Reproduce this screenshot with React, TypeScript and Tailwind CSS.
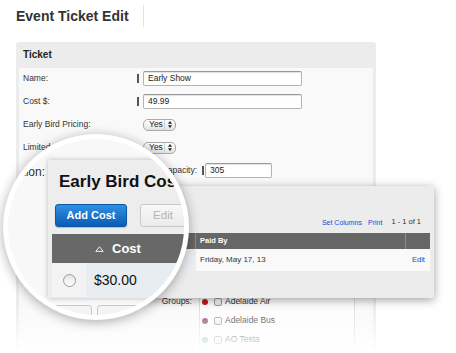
import React from "react";

const UpDown = () => (
  <svg width="4" height="7" viewBox="0 0 4 7">
    <path d="M2 0 L4 2.7 H0Z M2 7 L4 4.3 H0Z" fill="#222" />
  </svg>
);

function Select() {
  return (
    <div className="flex h-[12px] w-[33px] items-center justify-between rounded-[5px] border border-[#a9a9a9] bg-gradient-to-b from-white to-[#e2e2e2] pl-[5px] pr-[3px] text-[8.5px] leading-none text-[#222]">
      <span>Yes</span>
      <span className="flex h-full items-center border-l border-[#cfcfcf] pl-[3px]">
        <UpDown />
      </span>
    </div>
  );
}

function Input({ value, width }: { value: string; width: string }) {
  return (
    <div
      className={`flex h-[15px] items-center rounded-[2px] border border-[#b3b3b3] border-t-[#999] bg-white pl-[4px] text-[8.5px] leading-none text-[#222] shadow-[inset_0_1px_1px_rgba(0,0,0,0.12)] ${width}`}
    >
      {value}
    </div>
  );
}

function Marker() {
  return <div className="h-[9px] w-[2px] bg-[#555]" />;
}

function Row({ label, children, marker }: { label: string; children: React.ReactNode; marker?: boolean }) {
  return (
    <div className="flex h-[15px] items-center">
      <div className="w-[118px] pl-[4px] text-[8.5px] leading-none text-[#333]">{label}</div>
      <div className="w-[2px]">{marker ? <Marker /> : null}</div>
      <div className="ml-[4px]">{children}</div>
    </div>
  );
}

function GroupItem({ color, label }: { color: string; label: string }) {
  return (
    <div className="flex h-[19px] items-center pl-[2px]">
      <div className={`h-[6px] w-[6px] rounded-full ${color}`} />
      <div className="ml-[6px] h-[8px] w-[8px] rounded-[2px] border border-[#9a9a9a] bg-gradient-to-b from-white to-[#e6e6e6]" />
      <span className="ml-[3px] text-[8.5px] leading-none text-[#333]">{label}</span>
    </div>
  );
}

export default function App() {
  return (
    <div className="relative h-[353px] w-[456px] overflow-hidden bg-white font-['Liberation_Sans',Arial,sans-serif] text-[#333]">
      {/* Title */}
      <div className="mt-[5px] flex h-[22px] items-center pl-[16px]">
        <h1 className="text-[14px] font-bold leading-[14px] text-[#333]">Event Ticket Edit</h1>
        <div className="ml-[14px] h-[22px] w-px bg-[#e4e4e4]" />
      </div>

      {/* Panel */}
      <div className="ml-[16px] mt-[15px] w-[360px]">
        <div className="flex h-[26px] items-center rounded-t-[3px] bg-[#ececec] pl-[7px] text-[10px] font-bold leading-none text-[#222]">
          Ticket
        </div>
        <div className="h-[285px] border-x-[3px] border-[#ececec] bg-[#f9f9f9] pt-[3px]">
          <div className="flex flex-col gap-[8px]">
            <Row label="Name:" marker>
              <Input value="Early Show" width="w-[159px]" />
            </Row>
            <Row label="Cost $:" marker>
              <Input value="49.99" width="w-[159px]" />
            </Row>
            <Row label="Early Bird Pricing:">
              <Select />
            </Row>
            <Row label="Limited Quantity:">
              <Select />
            </Row>
            <div className="flex h-[15px] items-center">
              <div className="w-[178px] text-right text-[8.5px] leading-none text-[#333]">Capacity:</div>
              <div className="ml-[5px]">
                <Marker />
              </div>
              <div className="ml-[1px]">
                <Input value="305" width="w-[67px]" />
              </div>
            </div>
          </div>

          {/* Groups */}
          <div className="mt-[114px] flex items-start">
            <div className="flex h-[19px] w-[173px] items-center justify-end text-[8.5px] leading-none text-[#333]">
              Groups:
            </div>
            <div className="ml-[7px] h-[70px] w-[156px] border-x border-[#dcdcdc] bg-[#fcfcfc]">
              <GroupItem color="bg-[#c0161a]" label="Adelaide Air" />
              <GroupItem color="bg-[#8d4f68]" label="Adelaide Bus" />
              <GroupItem color="bg-[#7fb7b1]" label="AO Testa" />
            </div>
          </div>
        </div>
      </div>

      {/* bottom fade */}
      <div className="absolute left-0 right-0 top-[305px] h-[48px] bg-gradient-to-b from-white/0 to-white" />

      {/* Popup card */}
      <div className="absolute left-[130px] top-[186px] h-[112px] w-[304px] rounded-[2px] bg-[#ececec] shadow-[0_2px_10px_rgba(0,0,0,0.38)]">
        <div className="mt-[30px] flex h-[12px] items-center justify-end pr-[13px] leading-none">
          <span className="text-[7px] text-[#2e3fd8]">Set Columns</span>
          <span className="ml-[6px] text-[7px] text-[#2e3fd8]">Print</span>
          <span className="ml-[9px] text-[7.5px] text-[#333]">1 - 1 of 1</span>
        </div>
        <div className="mx-[4px] mt-[5px]">
          <div className="grid h-[16px] grid-cols-[16px_46px_210px_24px] bg-[#666] text-[7.5px] font-bold leading-none text-white">
            <div />
            <div className="flex items-center border-r border-[#8c8c8c] pl-[6px]">Cost</div>
            <div className="flex items-center border-r border-[#8c8c8c] pl-[4px]">Paid By</div>
            <div />
          </div>
          <div className="grid h-[22px] grid-cols-[16px_46px_210px_24px] bg-[#f9f9f9] text-[8px] leading-none">
            <div />
            <div className="flex items-center bg-[#eaeef2] pl-[4px] text-[#111]">$30.00</div>
            <div className="flex items-center pl-[4px] text-[#333]">Friday, May 17, 13</div>
            <div className="flex items-center pl-[6px] text-[7.5px] text-[#2e3fd8]">Edit</div>
          </div>
        </div>
      </div>

      {/* Magnifier */}
      <div className="absolute left-[3px] top-[134px] h-[186px] w-[186px] rounded-full bg-white p-[5px] shadow-[0_2px_12px_rgba(0,0,0,0.32)]">
        <div className="relative h-full w-full overflow-hidden rounded-full bg-[#f8f8f8]">
          <div className="flex pt-[21px]">
            <div className="flex w-[40px] shrink-0 justify-end pr-[3px] pt-[6px]">
              <span className="whitespace-nowrap text-[12px] leading-[12px] text-[#333]">Location:</span>
            </div>
            <div className="h-[138px] w-[220px] shrink-0 bg-[#ededed] shadow-[0_0_5px_rgba(0,0,0,0.25)]">
              <div className="whitespace-nowrap pl-[11px] pt-[13px] text-[17px] font-bold leading-[17px] text-[#111]">
                Early Bird Cost
              </div>
              <div className="mt-[14px] flex gap-[13px] pl-[7px]">
                <div className="flex h-[23px] w-[72px] items-center justify-center rounded-[3px] border border-[#0b56a6] bg-gradient-to-b from-[#2f90e4] to-[#0a5cb4] text-[11px] font-bold leading-none text-white shadow-[0_1px_1px_rgba(0,0,0,0.2)]">
                  Add Cost
                </div>
                <div className="flex h-[23px] w-[46px] items-center justify-center rounded-[3px] border border-[#c9c9c9] bg-gradient-to-b from-[#f8f8f8] to-[#ebebeb] text-[11.5px] leading-none text-[#b3b3b3]">
                  Edit
                </div>
              </div>
              <div className="ml-[4px] mt-[7px]">
                <div className="flex h-[29px] bg-[#686868]">
                  <div className="w-[34px]" />
                  <div className="flex items-center pl-[9px]">
                    <svg width="9" height="6" viewBox="0 0 9 6">
                      <polygon points="0.8,5.4 4.5,0.8 8.2,5.4" fill="none" stroke="#fff" strokeWidth="0.9" />
                    </svg>
                    <span className="ml-[8px] text-[13px] font-bold leading-none text-white">Cost</span>
                  </div>
                </div>
                <div className="flex h-[34px]">
                  <div className="flex w-[34px] items-center justify-center bg-[#f3f3f3]">
                    <div className="h-[13px] w-[13px] rounded-full border border-[#9a9a9a] bg-gradient-to-b from-[#e4e4e4] to-white" />
                  </div>
                  <div className="flex flex-1 items-center bg-[#e8edf2] pl-[8px] text-[14px] leading-none text-[#111]">
                    $30.00
                  </div>
                </div>
              </div>
            </div>
          </div>
          <div className="ml-[45px] mt-[7px] flex gap-[5px]">
            <div className="h-[30px] w-[44px] rounded-[3px] border border-[#c9c9c9] bg-[#f4f4f4]" />
            <div className="h-[30px] w-[100px] rounded-[3px] border border-[#c9c9c9] bg-[#f4f4f4]" />
          </div>
        </div>
      </div>
    </div>
  );
}
